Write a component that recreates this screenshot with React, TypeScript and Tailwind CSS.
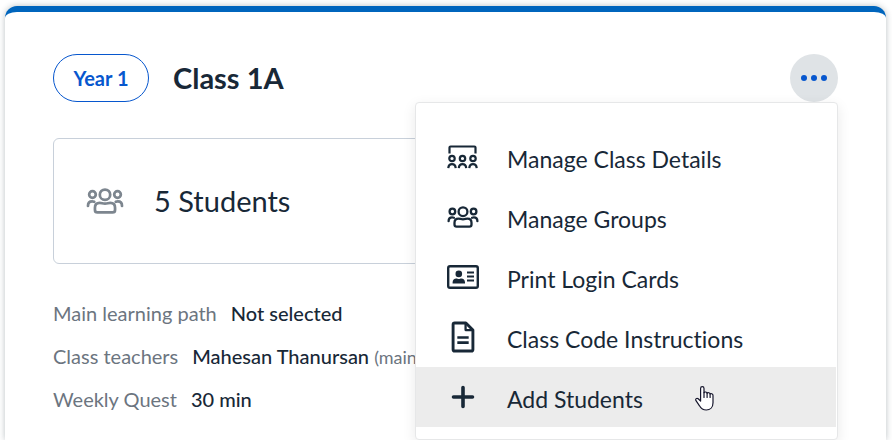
import type { ReactNode } from "react";

function UsersIcon({ className }: { className: string }) {
  return (
    <svg viewBox="0 0 32 22" className={className} fill="none" stroke="currentColor" strokeWidth="2.3" strokeLinecap="round" strokeLinejoin="round" aria-hidden="true">
      <circle cx="16" cy="5.7" r="4.4" />
      <circle cx="5.4" cy="5.5" r="2.8" />
      <circle cx="26.6" cy="5.5" r="2.8" />
      <path d="M1.6 15.200c0-2.600 1.400-3.800 3.500-3.800.8 0 1.300.1 1.800.3M30.400 15.200c0-2.600-1.400-3.800-3.500-3.800-.8 0-1.300.1-1.800.3" />
      <path d="M11.500 12.600c1.600 0 2.500.7 4.500.7s2.900-.7 4.500-.7c2.600 0 4 1.800 4 4.100v1.900c0 1.300-.8 2.100-2.100 2.100H9.600c-1.300 0-2.100-.8-2.100-2.100v-1.900c0-2.300 1.400-4.100 4-4.100z" />
    </svg>
  );
}

function ClassIcon() {
  return (
    <svg viewBox="0 0 32 24" className="h-6 w-8" fill="none" stroke="currentColor" strokeWidth="2.200" strokeLinejoin="round" aria-hidden="true">
      <path d="M2.500 8.500V2.600Q2.500 1.500 3.600 1.500H27.400Q28.500 1.500 28.500 2.600V8.500" />
      {[5, 15.500, 26].map((x) => (
        <g key={x}>
          <circle cx={x} cy="13.500" r="2.700" />
          <path d={`M${x - 3.700} 23.200c.2-2.800 1.500-4 3.700-4s3.500 1.200 3.700 4`} />
        </g>
      ))}
    </svg>
  );
}

function CardIcon() {
  return (
    <svg viewBox="0 0 32 24" className="h-6 w-8" fill="none" stroke="currentColor" aria-hidden="true">
      <rect x="1.200" y="1.200" width="29.600" height="21.600" rx="1.800" strokeWidth="2.400" />
      <circle cx="11.800" cy="8.900" r="3.300" fill="currentColor" stroke="none" />
      <path d="M5.600 18.600v-1.200c0-2.300 1.600-3.800 3.700-3.800 1 0 1.400.5 2.500.5s1.500-.5 2.500-.5c2.100 0 3.700 1.500 3.700 3.800v1.200z" fill="currentColor" stroke="none" />
      <path d="M20 7.500h7M20 11.500h7M20 15.500h7" strokeWidth="2" />
    </svg>
  );
}

function DocumentIcon() {
  return (
    <svg viewBox="0 0 23 31" className="h-8 w-6" fill="none" stroke="currentColor" strokeWidth="2.800" strokeLinejoin="round" aria-hidden="true">
      <path d="M3.500 1.900H14.300L21.100 8.700V27.500Q21.100 29.100 19.500 29.100H3.500Q1.900 29.100 1.900 27.500V3.500Q1.900 1.900 3.500 1.900z" />
      <path d="M14 2v6.800h7" strokeWidth="2.200" />
      <path d="M6 16h11M6 21h11" strokeWidth="2.600" />
    </svg>
  );
}

function PlusIcon() {
  return (
    <svg viewBox="0 0 24 24" className="size-6" fill="none" stroke="currentColor" strokeWidth="3.600" strokeLinecap="round" aria-hidden="true">
      <path d="M12 2.500v19M2.500 12h19" />
    </svg>
  );
}

function PointerCursor() {
  return (
    <svg viewBox="0 0 19 25" className="pointer-events-none absolute top-[19px] left-[279px] h-[25px] w-[19px]" fill="white" stroke="#15152b" strokeWidth="1.200" strokeLinejoin="round" strokeLinecap="round" aria-hidden="true">
      <path d="M5.600 15V2.500c0-2.400 3.400-2.400 3.400 0v4.200c.4-1 2.900-1 3.100.6.500-1 2.800-.7 3 .7.600-.7 2.900-.4 2.900 1.500v7.200c0 4.700-3 7.300-6.700 7.300-3.300 0-5.300-1.500-6.800-4.200L1 14.700c-1-1.900.8-3 2.200-2z" />
      <path d="M9 6.700v4.800M12.100 7.300v4.200M15.100 8v3.500" />
    </svg>
  );
}

function MenuItem({ icon, label, active = false, children }: { icon: ReactNode; label: string; active?: boolean; children?: ReactNode }) {
  return (
    <li className="relative pr-px">
      <button type="button" className={`flex h-15 w-full items-center text-left text-[23px] ${active ? "bg-[#ececec]" : "hover:bg-[#ececec]"}`}>
        <span className="mr-7 ml-[31px] flex h-8 w-8 items-center justify-center">{icon}</span>
        <span className="pt-1">{label}</span>
      </button>
      {children}
    </li>
  );
}

function Detail({ label, children }: { label: string; children: ReactNode }) {
  return (
    <div className="flex items-baseline gap-3.5 leading-[43px] whitespace-nowrap">
      <dt className="text-[#6c757f]">{label}</dt>
      <dd className="font-medium">{children}</dd>
    </div>
  );
}

export default function App() {
  return (
    <main className="flex min-h-screen flex-col overflow-hidden bg-white pt-1.5 pr-1.5 pl-[5px] font-['Lato',sans-serif] text-[#182837] [font-variant-ligatures:none]">
      <section className="flex-1 rounded-t-xl border-t-6 border-[#0065bd] bg-white px-12 pt-[42px] shadow-[0_0_6px_rgba(30,50,60,0.3)]">
        <header className="relative flex h-12 items-center">
          <span className="flex h-12 w-24 items-center justify-center rounded-full border border-[#0757ce] text-xl font-bold text-[#0757ce]">Year 1</span>
          <h1 className="ml-6 text-[29px] font-bold">Class 1A</h1>
          <button type="button" aria-label="Class options" aria-expanded="true" className="ml-auto flex size-12 items-center justify-center gap-1 rounded-full bg-[#dfe3e6]">
            <span className="size-1.5 rounded-full bg-[#0757ce]" />
            <span className="size-1.5 rounded-full bg-[#0757ce]" />
            <span className="size-1.5 rounded-full bg-[#0757ce]" />
          </button>
          <ul className="absolute top-full right-0 z-10 w-[423px] rounded-sm border border-[#e6e7e8] bg-white pt-6 pb-3 shadow-[0_4px_14px_rgba(0,0,0,0.09)]">
            <MenuItem icon={<ClassIcon />} label="Manage Class Details" />
            <MenuItem icon={<UsersIcon className="h-[22px] w-8" />} label="Manage Groups" />
            <MenuItem icon={<CardIcon />} label="Print Login Cards" />
            <MenuItem icon={<DocumentIcon />} label="Class Code Instructions" />
            <MenuItem icon={<PlusIcon />} label="Add Students" active>
              <PointerCursor />
            </MenuItem>
          </ul>
        </header>
        <div className="mt-9 flex h-[126px] items-center rounded-md border border-[#c8d0da] pl-8">
          <UsersIcon className="h-[26px] w-[38px] text-[#7d868f]" />
          <span className="ml-[30px] text-[29px]">5 Students</span>
        </div>
        <dl className="mt-7 text-xl">
          <Detail label="Main learning path">Not selected</Detail>
          <Detail label="Class teachers">
            Mahesan Thanursan <span className="text-lg font-normal text-[#6c757f]">(main)</span>
          </Detail>
          <Detail label="Weekly Quest">30 min</Detail>
        </dl>
      </section>
    </main>
  );
}
